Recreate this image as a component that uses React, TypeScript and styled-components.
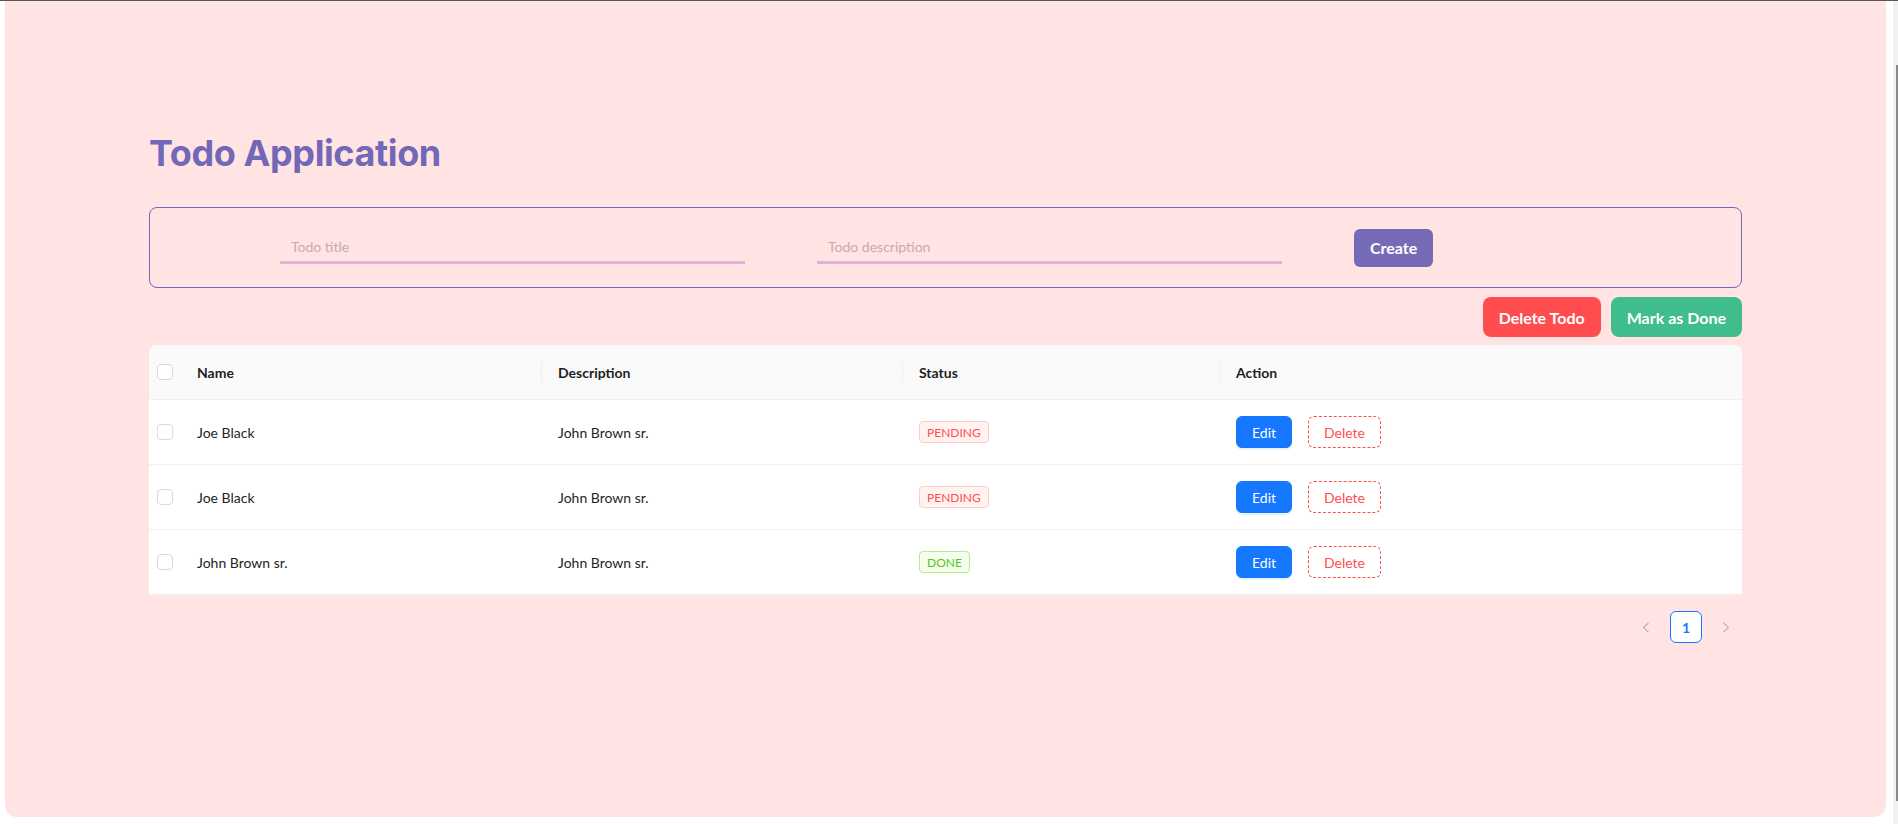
import React from "react";
import styled, { createGlobalStyle } from "styled-components";

const GlobalStyle = createGlobalStyle`
  html, body {
    margin: 0;
    padding: 0;
    background: #ffffff;
    font-family: Lato, "Liberation Sans", sans-serif;
  }
  * { box-sizing: border-box; }
`;

const Page = styled.div`
  display: flex;
  height: 824px;
  border-top: 1px solid #575757;
  overflow: hidden;
`;

const Viewport = styled.div`
  flex: 1;
  display: flex;
  padding: 0 7px 7px 5px;
`;

const Card = styled.main`
  flex: 1;
  display: flex;
  flex-direction: column;
  background: #ffe4e3;
  border-radius: 0 0 12px 12px;
  padding: 129px 144px 0;
`;

const ScrollTrack = styled.div`
  width: 5px;
  background: #f1f1f1;
  display: flex;
  flex-direction: column;
  align-items: flex-end;
  padding-top: 64px;
`;

const ScrollThumb = styled.div`
  width: 2px;
  height: 736px;
  background: #8a8a8a;
`;

const Title = styled.h1`
  margin: 0;
  font-family: Inter, "Liberation Sans", sans-serif;
  font-weight: 700;
  font-size: 36px;
  letter-spacing: -0.4px;
  line-height: 46px;
  color: #7367b8;
`;

const CreateForm = styled.form`
  margin-top: 31px;
  height: 81px;
  display: flex;
  align-items: center;
  gap: 72px;
  padding-left: 130px;
  border: 1px solid #7367b8;
  border-radius: 8px;
`;

const UnderlineInput = styled.input`
  width: 465px;
  height: 33px;
  padding: 0 11px;
  border: none;
  border-bottom: 3px solid #e3b0d6;
  background: transparent;
  font-family: Lato, "Liberation Sans", sans-serif;
  font-size: 14px;
  color: #333;
  outline: none;
  &::placeholder {
    color: #c8aaaa;
  }
`;

const SolidButton = styled.button<{ $bg: string; $h: number; $radius: number }>`
  height: ${(p) => p.$h}px;
  padding: 0 16px;
  border: none;
  border-radius: ${(p) => p.$radius}px;
  background: ${(p) => p.$bg};
  color: #ffffff;
  font-family: Lato, "Liberation Sans", sans-serif;
  font-weight: 700;
  font-size: 16px;
  cursor: pointer;
  white-space: nowrap;
`;

const BulkActions = styled.div`
  margin-top: 9px;
  display: flex;
  justify-content: flex-end;
  gap: 10px;
`;

const Table = styled.div`
  margin-top: 8px;
  background: #ffffff;
  border-radius: 8px 8px 0 0;
  overflow: hidden;
`;

const columns = "32px 361px 361px 317px 1fr";

const HeadRow = styled.div`
  display: grid;
  grid-template-columns: ${columns};
  height: 55px;
  background: #fafafa;
  border-bottom: 1px solid #f0f0f0;
`;

const BodyRow = styled.div`
  display: grid;
  grid-template-columns: ${columns};
  height: 65px;
  border-bottom: 1px solid #f0f0f0;
`;

const HeadCell = styled.div<{ $divider?: boolean }>`
  position: relative;
  display: flex;
  align-items: center;
  padding: 0 16px;
  font-size: 14px;
  font-weight: 700;
  color: #1f1f1f;
  &::after {
    content: "";
    display: ${(p) => (p.$divider ? "block" : "none")};
    position: absolute;
    right: 0;
    top: 50%;
    width: 1px;
    height: 22px;
    transform: translateY(-50%);
    background: #f0f0f0;
  }
`;

const Cell = styled.div`
  display: flex;
  align-items: center;
  gap: 16px;
  padding: 0 16px;
  font-size: 14px;
  color: #1f1f1f;
`;

const CheckCell = styled.div`
  display: flex;
  align-items: center;
  justify-content: center;
`;

const CheckBox = styled.span`
  width: 16px;
  height: 16px;
  border: 1px solid #d9d9d9;
  border-radius: 4px;
  background: #ffffff;
`;

const Tag = styled.span<{ $tone: "error" | "success" }>`
  display: inline-flex;
  align-items: center;
  height: 22px;
  padding: 0 7px;
  font-size: 12px;
  border-radius: 4px;
  border: 1px solid ${(p) => (p.$tone === "error" ? "#ffccc7" : "#b7eb8f")};
  background: ${(p) => (p.$tone === "error" ? "#fff2f0" : "#f6ffed")};
  color: ${(p) => (p.$tone === "error" ? "#ff4d4f" : "#52c41a")};
`;

const RowButton = styled.button<{ $variant: "primary" | "danger" }>`
  height: 32px;
  padding: 0 15px;
  border-radius: 6px;
  font-family: Lato, "Liberation Sans", sans-serif;
  font-size: 14px;
  cursor: pointer;
  border: ${(p) => (p.$variant === "primary" ? "1px solid #1677ff" : "1px dashed #ff4d4f")};
  background: ${(p) => (p.$variant === "primary" ? "#1677ff" : "#ffffff")};
  color: ${(p) => (p.$variant === "primary" ? "#ffffff" : "#ff4d4f")};
  box-shadow: ${(p) => (p.$variant === "primary" ? "0 2px 0 rgba(5,145,255,0.1)" : "none")};
`;

const Pagination = styled.nav`
  margin-top: 16px;
  display: flex;
  justify-content: flex-end;
  gap: 8px;
`;

const PageArrow = styled.span`
  width: 32px;
  height: 32px;
  display: flex;
  align-items: center;
  justify-content: center;
`;

const PageItem = styled.span`
  width: 32px;
  height: 32px;
  display: flex;
  align-items: center;
  justify-content: center;
  border: 1px solid #1677ff;
  border-radius: 6px;
  background: #ffffff;
  color: #1677ff;
  font-size: 14px;
  font-weight: 700;
`;

const Chevron = ({ dir }: { dir: "left" | "right" }) => (
  <svg width="8" height="11" viewBox="0 0 8 11" fill="none">
    <path
      d={dir === "left" ? "M6.5 0.8 L1.6 5.5 L6.5 10.2" : "M1.5 0.8 L6.4 5.5 L1.5 10.2"}
      stroke="#bdb3b3"
      strokeWidth="1.2"
    />
  </svg>
);

type Todo = { name: string; description: string; done: boolean };

const todos: Todo[] = [
  { name: "Joe Black", description: "John Brown sr.", done: false },
  { name: "Joe Black", description: "John Brown sr.", done: false },
  { name: "John Brown sr.", description: "John Brown sr.", done: true },
];

export default function App() {
  return (
    <>
      <GlobalStyle />
      <Page>
        <Viewport>
          <Card>
            <Title>Todo Application</Title>
            <CreateForm onSubmit={(e) => e.preventDefault()}>
              <UnderlineInput placeholder="Todo title" />
              <UnderlineInput placeholder="Todo description" />
              <SolidButton type="submit" $bg="#766bb7" $h={38} $radius={6}>
                Create
              </SolidButton>
            </CreateForm>
            <BulkActions>
              <SolidButton $bg="#ff4d4f" $h={40} $radius={8}>
                Delete Todo
              </SolidButton>
              <SolidButton $bg="#40bd8c" $h={40} $radius={8}>
                Mark as Done
              </SolidButton>
            </BulkActions>
            <Table>
              <HeadRow>
                <CheckCell>
                  <CheckBox />
                </CheckCell>
                <HeadCell $divider>Name</HeadCell>
                <HeadCell $divider>Description</HeadCell>
                <HeadCell $divider>Status</HeadCell>
                <HeadCell>Action</HeadCell>
              </HeadRow>
              {todos.map((t, i) => (
                <BodyRow key={i}>
                  <CheckCell>
                    <CheckBox />
                  </CheckCell>
                  <Cell>{t.name}</Cell>
                  <Cell>{t.description}</Cell>
                  <Cell>
                    <Tag $tone={t.done ? "success" : "error"}>{t.done ? "DONE" : "PENDING"}</Tag>
                  </Cell>
                  <Cell>
                    <RowButton $variant="primary">Edit</RowButton>
                    <RowButton $variant="danger">Delete</RowButton>
                  </Cell>
                </BodyRow>
              ))}
            </Table>
            <Pagination>
              <PageArrow>
                <Chevron dir="left" />
              </PageArrow>
              <PageItem>1</PageItem>
              <PageArrow>
                <Chevron dir="right" />
              </PageArrow>
            </Pagination>
          </Card>
        </Viewport>
        <ScrollTrack>
          <ScrollThumb />
        </ScrollTrack>
      </Page>
    </>
  );
}
